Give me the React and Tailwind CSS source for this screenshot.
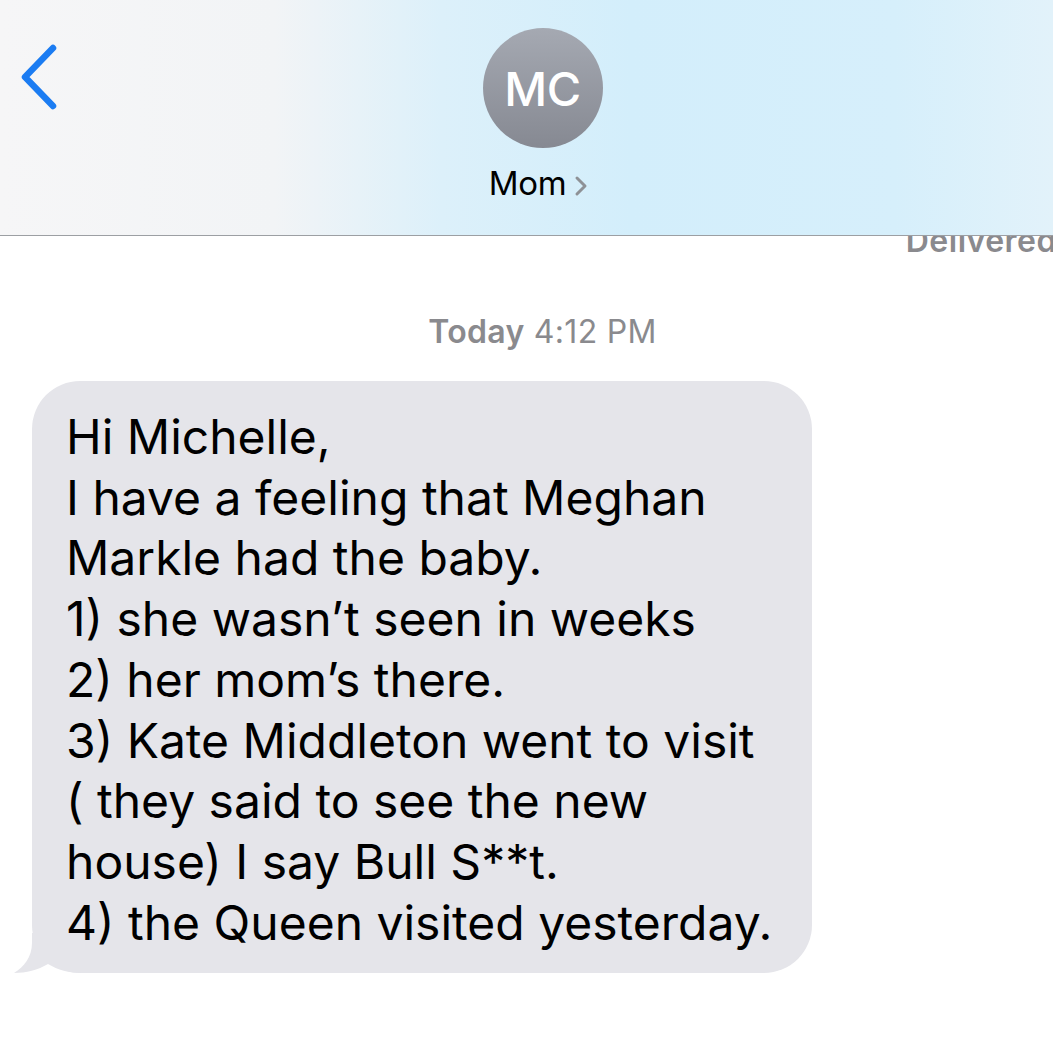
import React from "react";

const lines = [
  "Hi Michelle,",
  "I have a feeling that Meghan",
  "Markle had the baby.",
  "1) she wasn\u2019t seen in weeks",
  "2) her mom\u2019s there.",
  "3) Kate Middleton went to visit",
  "( they said to see the new",
  "house) I say Bull S**t.",
  "4) the Queen visited yesterday.",
];

export default function App() {
  return (
    <div className="relative w-[1053px] h-[1050px] overflow-hidden bg-white font-['Inter','Liberation_Sans',sans-serif]">
      {/* Header */}
      <div className="relative z-10 h-[236px] border-b-[1.5px] border-[#9c9fa3] bg-[linear-gradient(90deg,#f6f6f7_0%,#f2f4f6_26%,#dcf0fa_42%,#d3eefb_60%,#d6effb_85%,#e2f2fa_100%)]">
        <div className="flex items-start">
          <div className="pl-[20px] pt-[44px]">
            <svg width="40" height="66" viewBox="0 0 40 66">
              <path d="M33 4 L5 33 L33 62" fill="none" stroke="#1b7cf2" strokeWidth="6.5" strokeLinecap="round" strokeLinejoin="round" />
            </svg>
          </div>
          <div className="flex-1 flex flex-col items-center pt-[28px] pr-[28px]">
            <div className="w-[120px] h-[120px] rounded-full bg-[linear-gradient(180deg,#a5a9b2_0%,#868992_100%)] flex items-center justify-center">
              <span className="text-white text-[47px] font-medium tracking-[-0.5px] leading-none">MC</span>
            </div>
            <div className="mt-[19px] flex items-center gap-[8px] pr-[8px]">
              <span className="text-black text-[33px] leading-none tracking-[-0.3px]">Mom</span>
              <svg width="14" height="22" viewBox="0 0 14 22" className="mt-[4px]">
                <path d="M3 3 L11 11 L3 19" fill="none" stroke="#8e9196" strokeWidth="3" strokeLinecap="round" strokeLinejoin="round" />
              </svg>
            </div>
          </div>
        </div>
      </div>

      {/* Delivered */}
      <div className="flex justify-end -mt-[11px] mr-[-4px]">
        <span className="text-[#8a8a8e] text-[32px] font-semibold leading-none tracking-[0.5px]">Delivered</span>
      </div>

      {/* Timestamp */}
      <div className="flex justify-center pl-[32px] mt-[59px]">
        <span className="text-[#8a8a8e] text-[32px] leading-none tracking-[0.3px]">
          <span className="font-semibold">Today</span> 4:12 PM
        </span>
      </div>

      {/* Bubble */}
      <div className="relative ml-[32px] mt-[33px] w-[780px]">
        <div className="rounded-[48px] bg-[#e5e5ea] pl-[34px] pt-[26px] pb-[20px]">
          {lines.map((l, i) => (
            <div key={i} className="text-black text-[48px] leading-[60.7px] whitespace-nowrap">
              {l}
            </div>
          ))}
        </div>
        <svg className="absolute left-[-18px] bottom-0" width="70" height="40" viewBox="0 0 70 40">
          <path d="M18 0 L18 10 C18 24 10 34 0 40 C12 40 24 37 34 31 C44 37 54 40 70 40 L70 0 Z" fill="#e5e5ea" />
        </svg>
      </div>
    </div>
  );
}
